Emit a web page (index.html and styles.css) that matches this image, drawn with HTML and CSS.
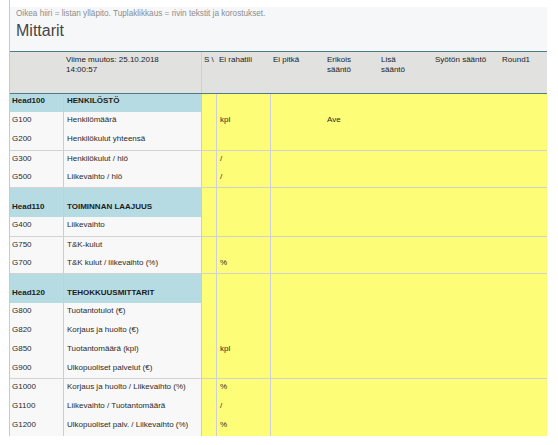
FILE: index.html
```html
<!DOCTYPE html>
<html lang="fi">
<head>
<meta charset="utf-8">
<title>Mittarit</title>
<link rel="stylesheet" href="styles.css">
</head>
<body>
<div class="page">
  <div class="top">
    <div class="hint">Oikea hiiri = listan ylläpito. Tuplaklikkaus = rivin tekstit ja korostukset.</div>
    <h1 class="title">Mittarit</h1>
  </div>

  <div class="row headrow">
    <div class="c code"></div>
    <div class="c name">Viime muutos: 25.10.2018<br>14:00:57</div>
    <div class="c s">S \</div>
    <div class="c u">Ei rahatili</div>
    <div class="c x">Ei pitkä</div>
    <div class="c x">Erikois<br>sääntö</div>
    <div class="c x">Lisä<br>sääntö</div>
    <div class="c x">Syötön sääntö</div>
    <div class="c x">Round1</div>
  </div>

  <div class="block">
    <div class="row grp h18"><div class="c code">Head100</div><div class="c name">HENKILÖSTÖ</div><div class="c s"></div><div class="c u"></div><div class="c x"></div><div class="c x"></div><div class="c x"></div><div class="c x"></div><div class="c x"></div></div>
    <div class="row item h19"><div class="c code">G100</div><div class="c name">Henkilömäärä</div><div class="c s"></div><div class="c u">kpl</div><div class="c x"></div><div class="c x">Ave</div><div class="c x"></div><div class="c x"></div><div class="c x"></div></div>
    <div class="row item h19"><div class="c code">G200</div><div class="c name">Henkilökulut yhteensä</div><div class="c s"></div><div class="c u"></div><div class="c x"></div><div class="c x"></div><div class="c x"></div><div class="c x"></div><div class="c x"></div></div>
  </div>

  <div class="block">
    <div class="row item h18"><div class="c code">G300</div><div class="c name">Henkilökulut / hlö</div><div class="c s"></div><div class="c u">/</div><div class="c x"></div><div class="c x"></div><div class="c x"></div><div class="c x"></div><div class="c x"></div></div>
    <div class="row item h18"><div class="c code">G500</div><div class="c name">Liikevaihto / hlö</div><div class="c s"></div><div class="c u">/</div><div class="c x"></div><div class="c x"></div><div class="c x"></div><div class="c x"></div><div class="c x"></div></div>
  </div>

  <div class="block">
    <div class="row grp tall"><div class="c code">Head110</div><div class="c name">TOIMINNAN LAAJUUS</div><div class="c s"></div><div class="c u"></div><div class="c x"></div><div class="c x"></div><div class="c x"></div><div class="c x"></div><div class="c x"></div></div>
    <div class="row item h19"><div class="c code">G400</div><div class="c name">Liikevaihto</div><div class="c s"></div><div class="c u"></div><div class="c x"></div><div class="c x"></div><div class="c x"></div><div class="c x"></div><div class="c x"></div></div>
  </div>

  <div class="block">
    <div class="row item h18"><div class="c code">G750</div><div class="c name">T&amp;K-kulut</div><div class="c s"></div><div class="c u"></div><div class="c x"></div><div class="c x"></div><div class="c x"></div><div class="c x"></div><div class="c x"></div></div>
    <div class="row item h18"><div class="c code">G700</div><div class="c name">T&amp;K kulut / liikevaihto (%)</div><div class="c s"></div><div class="c u">%</div><div class="c x"></div><div class="c x"></div><div class="c x"></div><div class="c x"></div><div class="c x"></div></div>
  </div>

  <div class="block">
    <div class="row grp tall"><div class="c code">Head120</div><div class="c name">TEHOKKUUSMITTARIT</div><div class="c s"></div><div class="c u"></div><div class="c x"></div><div class="c x"></div><div class="c x"></div><div class="c x"></div><div class="c x"></div></div>
    <div class="row item h19"><div class="c code">G800</div><div class="c name">Tuotantotulot (€)</div><div class="c s"></div><div class="c u"></div><div class="c x"></div><div class="c x"></div><div class="c x"></div><div class="c x"></div><div class="c x"></div></div>
    <div class="row item h19"><div class="c code">G820</div><div class="c name">Korjaus ja huolto (€)</div><div class="c s"></div><div class="c u"></div><div class="c x"></div><div class="c x"></div><div class="c x"></div><div class="c x"></div><div class="c x"></div></div>
    <div class="row item h19"><div class="c code">G850</div><div class="c name">Tuotantomäärä (kpl)</div><div class="c s"></div><div class="c u">kpl</div><div class="c x"></div><div class="c x"></div><div class="c x"></div><div class="c x"></div><div class="c x"></div></div>
    <div class="row item h18"><div class="c code">G900</div><div class="c name">Ulkopuoliset palvelut (€)</div><div class="c s"></div><div class="c u"></div><div class="c x"></div><div class="c x"></div><div class="c x"></div><div class="c x"></div><div class="c x"></div></div>
  </div>

  <div class="block">
    <div class="row item h19"><div class="c code">G1000</div><div class="c name">Korjaus ja huolto / Liikevaihto (%)</div><div class="c s"></div><div class="c u">%</div><div class="c x"></div><div class="c x"></div><div class="c x"></div><div class="c x"></div><div class="c x"></div></div>
    <div class="row item h19"><div class="c code">G1100</div><div class="c name">Liikevaihto / Tuotantomäärä</div><div class="c s"></div><div class="c u">/</div><div class="c x"></div><div class="c x"></div><div class="c x"></div><div class="c x"></div><div class="c x"></div></div>
    <div class="row item h19"><div class="c code">G1200</div><div class="c name">Ulkopuoliset palv. / Liikevaihto (%)</div><div class="c s"></div><div class="c u">%</div><div class="c x"></div><div class="c x"></div><div class="c x"></div><div class="c x"></div><div class="c x"></div></div>
  </div>
</div>
</body>
</html>
```

FILE: styles.css
```css
* { box-sizing: border-box; }
html, body { margin: 0; padding: 0; background: #ffffff; }
body {
  font-family: "Liberation Sans", Arial, sans-serif;
  color: #2a2a2a;
}
.page {
  margin-left: 9px;
  width: 538px;
  border-left: 1px solid #c9c9c9;
  padding-top: 7px;
}
.top {
  height: 45px;
  background: #f6f7f9;
  border-bottom: 1px solid #4e7c86;
  padding: 2px 0 0 6px;
}
.hint {
  font-size: 8.2px;
  line-height: 10px;
  color: #8b8d92;
}
.title {
  margin: 3px 0 0 0;
  font-size: 16px;
  line-height: 18px;
  font-weight: normal;
  color: #454545;
}
.row {
  display: grid;
  grid-template-columns: 54px 138px 15px 54px 54px 54px 54px 67px 1fr;
  background: #fdfd78;
}
.c {
  white-space: nowrap;
  overflow: hidden;
  font-size: 8px;
  line-height: 9px;
  padding: 3px 0 0 2px;
}
.headrow {
  height: 42px;
  background: #e1e1e0;
  border-bottom: 1px solid #4e7c86;
}
.headrow .c {
  font-size: 8px;
  line-height: 10px;
  padding: 3px 0 0 2px;
  color: #222;
}
.headrow .name { border-right: 1px solid #cfcfcf; }

.block + .block { border-top: 1px solid #d2d2d4; }

.item .code, .item .name { background: #f8f8f8; }
.grp .code, .grp .name { background: #b7dbe2; font-weight: bold; color: #1c1c1c; }
.row:not(.headrow) .code { border-right: 1px solid #cdcdcd; }
.row:not(.headrow) .name { border-right: 1px solid #cdcdcd; padding-left: 3px; }
.row:not(.headrow) .s { border-right: 1px solid #cfcfd4; }
.row:not(.headrow) .u { border-right: 1px solid #cfcfd8; padding-left: 3px; }
.row:not(.headrow) .x { padding-left: 2px; }

.h18 { height: 18px; }
.h19 { height: 19px; }
.tall { height: 29px; }
.tall .c { padding-top: 14px; }
.grp.h18 .c { padding-top: 2px; }
```
